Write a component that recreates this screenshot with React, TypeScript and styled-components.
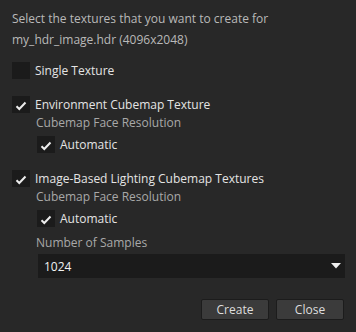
import React from "react";
import styled, { createGlobalStyle } from "styled-components";

const GlobalStyle = createGlobalStyle`
  html, body {
    margin: 0;
    padding: 0;
    background: #282828;
  }
  body {
    font-family: "Open Sans", "Noto Sans", sans-serif;
    font-size: 12px;
    -webkit-font-smoothing: antialiased;
  }
`;

const Dialog = styled.div`
  width: 356px;
  height: 332px;
  box-sizing: border-box;
  padding: 8px 11px 0 11px;
  display: flex;
  flex-direction: column;
  background: #282828;
`;

const Description = styled.div`
  color: #b9b9b9;
  line-height: 21px;
  padding-left: 1px;
`;

const CheckRow = styled.label<{ $top: number; $indent?: boolean }>`
  display: flex;
  align-items: center;
  height: 17px;
  margin-top: ${(p) => p.$top}px;
  margin-left: ${(p) => (p.$indent ? 26 : 1)}px;
  gap: 5px;
  color: #e4e4e4;
`;

const Box = styled.span`
  width: 18px;
  height: 17px;
  background: #1b1b1b;
  display: flex;
  align-items: center;
  justify-content: center;
  flex-shrink: 0;
`;

const SubLabel = styled.div<{ $top?: number }>`
  color: #a8a8a8;
  line-height: 19px;
  margin-top: ${(p) => p.$top ?? 0}px;
  padding-left: 25px;
`;

const Select = styled.div`
  margin: 2px 0 0 27px;
  height: 24px;
  background: #1b1b1b;
  display: flex;
  align-items: center;
  justify-content: space-between;
  padding: 0 4px 0 6px;
  color: #f2f2f2;
`;

const Footer = styled.div`
  margin-top: 21px;
  display: flex;
  justify-content: flex-end;
  gap: 7px;
  padding-right: 1px;
`;

const Button = styled.button`
  width: 68px;
  height: 21px;
  box-sizing: border-box;
  background: #3b3b3b;
  border: 1px solid #1c1c1c;
  border-radius: 2px;
  color: #dedede;
  font-family: inherit;
  font-size: 12px;
  padding: 0;
  line-height: 18px;
`;

const Check = () => (
  <svg width="12" height="10" viewBox="0 0 12 10" style={{ marginTop: 3 }}>
    <path d="M1.5 5.2 L4.3 8 L10.5 1.5" fill="none" stroke="#ececec" strokeWidth="2" />
  </svg>
);

const Checkbox = ({ checked }: { checked?: boolean }) => <Box>{checked && <Check />}</Box>;

export default function App() {
  return (
    <>
      <GlobalStyle />
      <Dialog>
        <Description>
          Select the textures that you want to create for
          <br />
          my_hdr_image.hdr (4096x2048)
        </Description>
        <CheckRow $top={12}>
          <Checkbox />
          Single Texture
        </CheckRow>
        <CheckRow $top={17}>
          <Checkbox checked />
          Environment Cubemap Texture
        </CheckRow>
        <SubLabel>Cubemap Face Resolution</SubLabel>
        <CheckRow $top={4} $indent>
          <Checkbox checked />
          Automatic
        </CheckRow>
        <CheckRow $top={17}>
          <Checkbox checked />
          Image-Based Lighting Cubemap Textures
        </CheckRow>
        <SubLabel>Cubemap Face Resolution</SubLabel>
        <CheckRow $top={4} $indent>
          <Checkbox checked />
          Automatic
        </CheckRow>
        <SubLabel $top={6}>Number of Samples</SubLabel>
        <Select>
          1024
          <svg width="10" height="6" viewBox="0 0 10 6">
            <path d="M0 0 H10 L5 5.5 Z" fill="#f0f0f0" />
          </svg>
        </Select>
        <Footer>
          <Button>Create</Button>
          <Button>Close</Button>
        </Footer>
      </Dialog>
    </>
  );
}
